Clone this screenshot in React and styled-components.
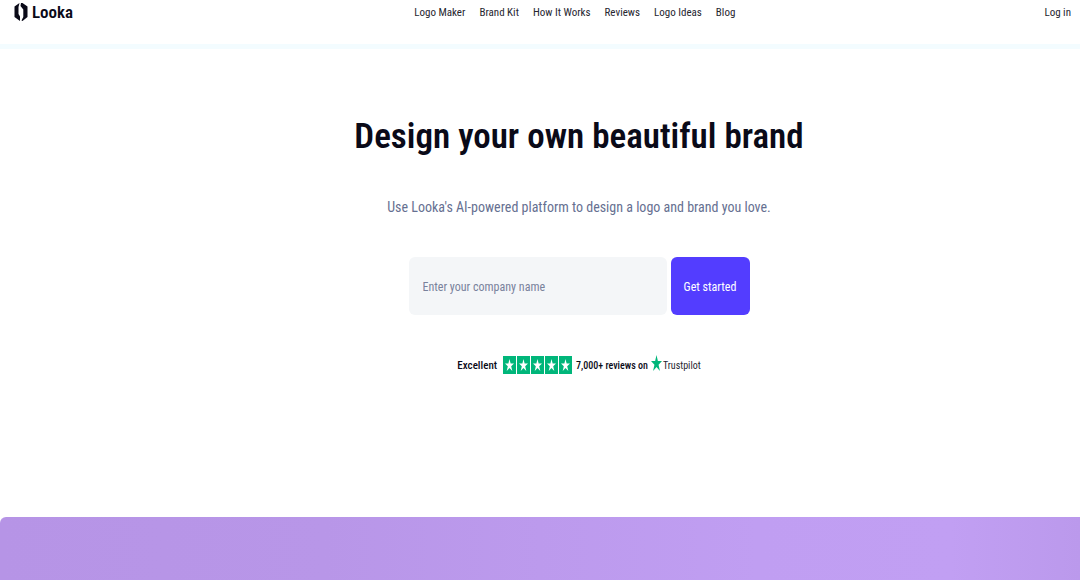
import React, { useState } from "react";
import styled, { createGlobalStyle } from "styled-components";

const navLinks = [
	{ id: 1, label: "Logo Maker" },
	{ id: 2, label: "Brand Kit" },
	{ id: 3, label: "How It Works" },
	{ id: 4, label: "Reviews" },
	{ id: 5, label: "Logo Ideas" },
	{ id: 6, label: "Blog" },
];

const STAR = "M12 0l3 9h9l-7.500 5.500 3 9.500L12 18l-7.500 6 3-9.500L0 9h9z";

export default function App() {
	const [company, setCompany] = useState("");

	return (
		<>
			<GlobalStyle />
			<Header>
				<Logo href='#home'>
					<LogoMark viewBox='0 0 14 20' aria-hidden='true'>
						<path d='M5.500 1L0.500 4.500v10.500l5.500 4V14.500L4.500 12V5z' />
						<path d='M7 1h1.500L13.500 4.500v10.500L8.500 19 7.500 18.500l1.800-3.500V7.500L6.500 4z' />
					</LogoMark>
					Looka
				</Logo>
				<Nav>
					{navLinks.map((link) => (
						<NavLink key={link.id} href='#'>
							{link.label}
						</NavLink>
					))}
				</Nav>
				<NavLink href='#login'>Log in</NavLink>
			</Header>
			<Hero>
				<Title>Design your own beautiful brand</Title>
				<Subtitle>
					Use Looka's AI-powered platform to design a logo and brand you love.
				</Subtitle>
				<Form onSubmit={(e) => e.preventDefault()}>
					<CompanyInput
						type='text'
						aria-label='Company name'
						placeholder='Enter your company name'
						value={company}
						onChange={(e) => setCompany(e.target.value)}
					/>
					<StartButton type='submit'>Get started</StartButton>
				</Form>
				<Rating>
					<Excellent>Excellent</Excellent>
					<Stars>
						{[1, 2, 3, 4, 5].map((n) => (
							<StarBox key={n}>
								<StarIcon viewBox='0 0 24 24' preserveAspectRatio='none'>
									<path d={STAR} />
								</StarIcon>
							</StarBox>
						))}
					</Stars>
					<Reviews>7,000+ reviews on</Reviews>
					<Trustpilot href='#reviews'>
						<TrustStar viewBox='0 0 24 24' preserveAspectRatio='none'>
							<path d={STAR} />
						</TrustStar>
						Trustpilot
					</Trustpilot>
				</Rating>
			</Hero>
			<Banner />
		</>
	);
}

const GlobalStyle = createGlobalStyle`
	html,
	body,
	#root {
		height: 100%;
	}
	body {
		margin: 0;
		background: #fff;
		color: #0a0a18;
		font-family: "Roboto Condensed", Roboto, sans-serif;
	}
	#root {
		display: flex;
		flex-direction: column;
	}
	* {
		box-sizing: border-box;
	}
`;

const Header = styled.header`
	display: flex;
	justify-content: space-between;
	align-items: flex-start;
	height: 44px;
	padding: 0 9px 0 14px;
	box-shadow: 0 5px 0 0 #f3fcff;
`;

const Logo = styled.a`
	display: flex;
	align-items: center;
	gap: 4px;
	height: 24px;
	color: #0a0a18;
	font-size: 17px;
	font-weight: 600;
	text-decoration: none;
`;

const LogoMark = styled.svg`
	width: 14px;
	height: 20px;
	fill: currentColor;
`;

const Nav = styled.nav`
	display: flex;
	gap: 14px;
	margin-left: 32px;
`;

const NavLink = styled.a`
	color: #26262f;
	font-size: 11px;
	line-height: 26px;
	text-decoration: none;
	white-space: nowrap;
`;

const Hero = styled.main`
	display: flex;
	flex-direction: column;
	align-items: center;
	padding: 69px 0 142px 78px;
`;

const Title = styled.h1`
	margin: 0;
	font-size: 35px;
	font-weight: 600;
	line-height: 48px;
	white-space: nowrap;
`;

const Subtitle = styled.p`
	margin: 34px 0 38px;
	color: #667091;
	font-size: 14px;
	line-height: 24px;
	white-space: nowrap;
`;

const Form = styled.form`
	display: flex;
	gap: 4px;
`;

const CompanyInput = styled.input`
	width: 258px;
	height: 58px;
	padding: 2px 14px 0;
	border: 0;
	border-radius: 6px;
	background: #f4f6f8;
	color: #0a0a18;
	font-family: inherit;
	font-size: 12px;
	&::placeholder {
		color: #79829c;
	}
`;

const StartButton = styled.button`
	width: 79px;
	height: 58px;
	padding: 2px 0 0;
	border: 0;
	border-radius: 6px;
	background: #533dff;
	color: #fff;
	font-family: inherit;
	font-size: 12px;
	cursor: pointer;
`;

const Rating = styled.div`
	display: flex;
	align-items: center;
	height: 20px;
	margin-top: 40px;
	font-size: 10px;
	white-space: nowrap;
`;

const Excellent = styled.span`
	margin-right: 6px;
	font-size: 11px;
	font-weight: 500;
`;

const Stars = styled.div`
	display: flex;
	gap: 1px;
	margin-right: 4px;
`;

const StarBox = styled.span`
	display: flex;
	align-items: center;
	justify-content: center;
	width: 13px;
	height: 18px;
	background: #00b67a;
`;

const StarIcon = styled.svg`
	width: 9px;
	height: 12px;
	fill: #fff;
`;

const Reviews = styled.span`
	margin-right: 3px;
	font-weight: 500;
`;

const Trustpilot = styled.a`
	display: flex;
	align-items: center;
	gap: 1px;
	color: #26262f;
	text-decoration: none;
`;

const TrustStar = styled.svg`
	width: 11px;
	height: 16px;
	margin-bottom: 4px;
	fill: #00b67a;
`;

const Banner = styled.section`
	flex: 1;
	min-height: 63px;
	border-radius: 6px 0 0 0;
	background: linear-gradient(
		to right,
		#b694e6 0%,
		#b896e8 30%,
		#c09ef2 70%,
		#c19ff3 88%,
		#bb99ec 100%
	);
`;
